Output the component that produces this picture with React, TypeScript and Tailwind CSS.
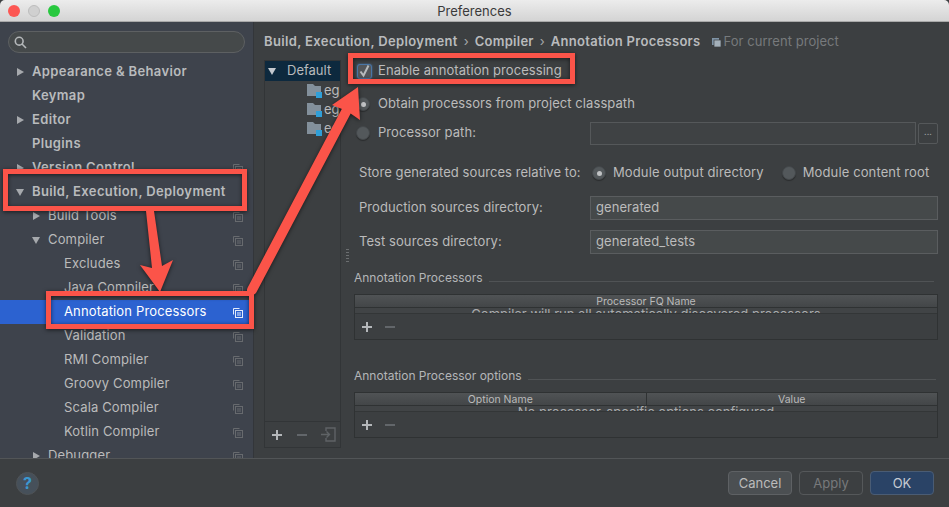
import React from "react";

const Tri = ({ down, light }: { down?: boolean; light?: boolean }) => (
  <svg width="10" height="10" viewBox="0 0 10 10" className="shrink-0">
    <path d={down ? "M1 2h8L5 9z" : "M2 1l7 4-7 4z"} fill={light ? "#c4c9cf" : "#a6a9ad"} />
  </svg>
);

const Copy = ({ c = "#6d7074" }: { c?: string }) => (
  <svg width="10" height="10" viewBox="0 0 10 10" fill="none" stroke={c} strokeWidth="1" className="shrink-0 mt-[1px]">
    <path d="M.5 6.5v-6h6" />
    <rect x="2.5" y="2.5" width="7" height="7" />
    <path d="M4 5h4M4 7h4" />
  </svg>
);

const Folder = () => (
  <svg width="16" height="14" viewBox="0 0 16 14" className="shrink-0">
    <path d="M0 0h6l2 2h6v10H0z" fill="#83909b" />
    <rect x="9" y="8" width="6" height="6" fill="#2f9fd8" />
  </svg>
);

const rows: { t: string; level: number; arrow?: "r" | "d"; bold?: boolean; copy?: boolean; sel?: boolean }[] = [
  { t: "Appearance & Behavior", level: 0, arrow: "r", bold: true },
  { t: "Keymap", level: 0, bold: true },
  { t: "Editor", level: 0, arrow: "r", bold: true },
  { t: "Plugins", level: 0, bold: true },
  { t: "Version Control", level: 0, arrow: "r", bold: true, copy: true },
  { t: "Build, Execution, Deployment", level: 0, arrow: "d", bold: true },
  { t: "Build Tools", level: 1, arrow: "r", copy: true },
  { t: "Compiler", level: 1, arrow: "d", copy: true },
  { t: "Excludes", level: 2, copy: true },
  { t: "Java Compiler", level: 2, copy: true },
  { t: "Annotation Processors", level: 2, copy: true, sel: true },
  { t: "Validation", level: 2, copy: true },
  { t: "RMI Compiler", level: 2, copy: true },
  { t: "Groovy Compiler", level: 2, copy: true },
  { t: "Scala Compiler", level: 2, copy: true },
  { t: "Kotlin Compiler", level: 2, copy: true },
  { t: "Debugger", level: 1, arrow: "r", copy: true },
];

const Radio = ({ on }: { on?: boolean }) => (
  <span className="w-[14px] h-[14px] rounded-full bg-[#53585b] border border-[#43474a] shadow-[0_1px_1px_rgba(0,0,0,0.3)] flex items-center justify-center shrink-0">
    {on && <span className="w-[5px] h-[5px] rounded-full bg-[#c0c2c4]" />}
  </span>
);

const Plus = ({ c = "#b4b7ba" }: { c?: string }) => (
  <svg width="12" height="12" viewBox="0 0 12 12" className="shrink-0">
    <path d="M6 1v10M1 6h10" stroke={c} strokeWidth="2" />
  </svg>
);
const Minus = () => (
  <svg width="12" height="12" viewBox="0 0 12 12" className="shrink-0">
    <path d="M1 6h10" stroke="#62666a" strokeWidth="2" />
  </svg>
);

const Field = ({ label, value }: { label: string; value: string }) => (
  <div className="flex items-center">
    <span className="w-[236px] pl-[5px] shrink-0">{label}</span>
    <div className="flex-1 h-[24px] bg-[#45494a] border border-[#5a5d5f] flex items-center px-[5px] text-[#bcbcbc]">{value}</div>
  </div>
);

const Section = ({ title, lineW }: { title: string; lineW: number }) => (
  <div className="flex items-center gap-[6px] h-[18px] text-[12px] tracking-normal text-[#b4b6b8] whitespace-nowrap">
    <span>{title}</span>
    <span className="h-px bg-[#505355] mt-[6px] shrink-0" style={{ width: lineW }} />
  </div>
);

const Table = ({ cols, clip }: { cols: string[]; clip: string }) => (
  <div className="border border-[#2f3233] h-[46px] flex flex-col text-[10.5px] tracking-normal text-[#bbbbbb]">
    <div className="flex h-[13px] bg-gradient-to-b from-[#505355] to-[#434648] border-b border-[#2f3233] shrink-0">
      {cols.map((c, i) => (
        <div key={c} className={`flex-1 flex items-center justify-center leading-none pt-[2px] ${i > 0 ? "border-l border-[#2f3233]" : ""}`}>{c}</div>
      ))}
    </div>
    <div className="h-[6px] overflow-hidden text-center text-[13px] leading-[13px] text-[#a9abad] border-b border-[#333637] bg-[#414446] shrink-0 whitespace-nowrap">{clip}</div>
    <div className="flex-1 flex items-center gap-[11px] pl-[6px]">
      <Plus />
      <Minus />
    </div>
  </div>
);

const Btn = ({ t, cls }: { t: string; cls: string }) => (
  <div className={`w-[64px] h-[24px] rounded-[4px] flex items-center justify-center text-[13px] pt-[1px] ${cls}`}>{t}</div>
);

export default function App() {
  return (
    <div className="relative w-[949px] h-[507px] overflow-hidden flex flex-col bg-[#3c3f41] text-[13px] text-[#bbbbbb] font-['Inter','Liberation_Sans',sans-serif]">
      <div className="h-[22px] shrink-0 relative flex items-center justify-center bg-gradient-to-b from-[#ececec] to-[#d4d4d4] border-b border-[#a9a9a9] rounded-t-[5px]">
        <div className="absolute left-[8px] top-[5px] flex gap-[8px]">
          <span className="w-[12px] h-[12px] rounded-full bg-[#fc5753]" />
          <span className="w-[12px] h-[12px] rounded-full bg-[#d0d0d0] border border-[#bdbdbd]" />
          <span className="w-[12px] h-[12px] rounded-full bg-[#28c83f]" />
        </div>
        <span className="text-[#3a3a3a] text-[13px] leading-none pt-[1px]">Preferences</span>
      </div>

      <div className="flex-1 flex min-h-0">
        <aside className="w-[254px] shrink-0 bg-[#3e434c] border-r border-[#33363a] flex flex-col overflow-hidden">
          <div className="px-[8px] pt-[9px] pb-[7px] shrink-0">
            <div className="h-[22px] rounded-full bg-[#45494a] border border-[#5d6062] flex items-center pl-[5px]">
              <svg width="13" height="13" viewBox="0 0 13 13" fill="none" stroke="#b5b8ba" strokeWidth="1.6">
                <circle cx="5.2" cy="5.2" r="3.9" />
                <path d="M8 8l4 4" />
              </svg>
            </div>
          </div>
          {rows.map((r) => (
            <div key={r.t} className={`h-[24px] shrink-0 flex items-center relative pr-[10px] ${r.sel ? "bg-[#2c62d0] text-white" : ""} ${r.bold ? "font-semibold text-[#b9bbbd] tracking-[0.36px]" : "tracking-[0.15px]"}`}>
              <div className={`flex items-center ${r.level === 0 ? "pl-[15px]" : r.level === 1 ? "pl-[31px]" : "pl-[64px]"}`}>
                {r.arrow && <Tri down={r.arrow === "d"} />}
                <span className={`${r.arrow ? "ml-[7px]" : r.level === 0 ? "ml-[17px]" : ""} whitespace-nowrap`}>{r.t}</span>
              </div>
              {r.copy && (
                <div className="ml-auto">
                  <Copy c={r.sel ? "#e4ecfb" : "#676a6e"} />
                </div>
              )}
            </div>
          ))}
        </aside>

        <main className="flex-1 min-w-0 pl-[10px] pr-[11px] flex flex-col">
          <div className="h-[38px] shrink-0 flex items-center whitespace-nowrap pt-[2px]">
            <span className="font-semibold text-[#b9bbbd] tracking-[0.36px]">Build, Execution, Deployment</span>
            <span className="mx-[6px] text-[#a5a7a9]">›</span>
            <span className="font-semibold text-[#b9bbbd] tracking-[0.25px]">Compiler</span>
            <span className="mx-[6px] text-[#a5a7a9]">›</span>
            <span className="font-semibold text-[#b9bbbd] tracking-[0.3px]">Annotation Processors</span>
            <svg width="9" height="9" viewBox="0 0 9 9" className="ml-[11px] shrink-0" fill="none">
              <rect x="0" y="0" width="7" height="7" fill="#7f94a6" />
              <rect x="2" y="2" width="7" height="7" fill="#a4b0ba" stroke="#3c3f41" strokeWidth="0.7" />
            </svg>
            <span className="ml-[3px] text-[#777a7c] tracking-[0.05px]">For current project</span>
          </div>

          <div className="flex">
            <div className="w-[77px] h-[388px] shrink-0 border border-[#323537] flex flex-col">
              <div className="h-[20px] shrink-0 bg-[#0d293e] flex items-center pl-[2px]">
                <Tri down light />
                <span className="ml-[10px] text-[#b9bbbd]">Default</span>
              </div>
              <div className="flex-1 pl-[42px] overflow-hidden">
                {[0, 1, 2].map((i) => (
                  <div key={i} className="h-[19px] flex items-center gap-[1px] overflow-hidden whitespace-nowrap">
                    <Folder />
                    <span>eg</span>
                  </div>
                ))}
              </div>
              <div className="h-[26px] shrink-0 border-t border-[#323537] flex items-center pl-[6px] gap-[13px]">
                <Plus />
                <Minus />
                <svg width="15" height="15" viewBox="0 0 15 15" fill="none" stroke="#5f6366" strokeWidth="1.4">
                  <path d="M5 4V1h9v13H5v-3M0 7.5h8M5.5 4.5l3 3-3 3" />
                </svg>
              </div>
            </div>

            <div className="w-[13px] shrink-0 flex items-start justify-center pt-[189px]">
              <div className="w-[3px] h-[14px] bg-[repeating-linear-gradient(to_bottom,#6b6e70_0,#6b6e70_1px,transparent_1px,transparent_3px)]" />
            </div>

            <div className="flex-1 min-w-0 flex flex-col text-[13px] tracking-[0.07px]">
              <div className="h-[24px] mt-[-1px] flex items-center pl-[3px] gap-[6px]">
                <span className="w-[15px] h-[15px] rounded-[3px] bg-[#53565a] border border-[#4a76a6] shadow-[0_0_2px_#4a76a6] flex items-center justify-center shrink-0">
                  <svg width="13" height="13" viewBox="0 0 13 13" fill="none" stroke="#b7babc" strokeWidth="2" className="overflow-visible">
                    <path d="M2.5 6.5l3 4 5-10" />
                  </svg>
                </span>
                <span>Enable annotation processing</span>
              </div>
              <div className="h-[24px] mt-[9px] flex items-center pl-[2px] gap-[8px]">
                <Radio on />
                <span>Obtain processors from project classpath</span>
              </div>
              <div className="h-[24px] mt-[5px] flex items-center pl-[2px]">
                <Radio />
                <span className="ml-[8px]">Processor path:</span>
                <div className="ml-auto w-[326px] h-[23px] bg-[#3f4244] border border-[#55585a]" />
                <div className="ml-[2px] w-[20px] h-[21px] rounded-[2px] border border-[#55585a] flex items-center justify-center text-[9px] leading-none text-[#9a9c9e] pb-[3px]">...</div>
              </div>
              <div className="h-[24px] mt-[16px] flex items-center pl-[5px]">
                <span className="w-[233px] shrink-0">Store generated sources relative to:</span>
                <Radio on />
                <span className="ml-[7px] tracking-[0.12px]">Module output directory</span>
                <span className="ml-[18px]"><Radio /></span>
                <span className="ml-[7px] tracking-[0.12px]">Module content root</span>
              </div>
              <div className="mt-[11px]">
                <Field label="Production sources directory:" value="generated" />
              </div>
              <div className="mt-[10px]">
                <Field label="Test sources directory:" value="generated_tests" />
              </div>
              <div className="mt-[15px]">
                <Section title="Annotation Processors" lineW={445} />
              </div>
              <div className="mt-[7px]">
                <Table cols={["Processor FQ Name"]} clip="Compiler will run all automatically discovered processors" />
              </div>
              <div className="mt-[27px]">
                <Section title="Annotation Processor options" lineW={408} />
              </div>
              <div className="mt-[7px]">
                <Table cols={["Option Name", "Value"]} clip="No processor-specific options configured" />
              </div>
            </div>
          </div>
        </main>
      </div>

      <footer className="h-[49px] shrink-0 border-t border-[#525557] bg-[#3c3f41] flex items-center pl-[16px] pr-[15px] relative z-0">
        <div className="w-[23px] h-[23px] rounded-full bg-[#46505a] border border-[#4f5356] flex items-center justify-center text-[#3b97d0] font-bold text-[16px] leading-none">?</div>
        <div className="ml-auto flex gap-[7px]">
          <Btn t="Cancel" cls="bg-[#4b4f52] border border-[#5e6164] text-[#bbbbbb]" />
          <Btn t="Apply" cls="border border-[#55585a] text-[#77797b]" />
          <Btn t="OK" cls="bg-[#2a4366] border border-[#4a5c74] text-[#c6cbd2]" />
        </div>
      </footer>

      <svg width="949" height="507" viewBox="0 0 949 507" className="absolute inset-0 pointer-events-none drop-shadow-[0_1px_2px_rgba(0,0,0,0.6)]" fill="none">
        <rect x="5.5" y="171.5" width="239" height="37" stroke="#fb5449" strokeWidth="5" />
        <rect x="48.5" y="293.5" width="203" height="33" stroke="#fb5449" strokeWidth="5" />
        <rect x="350.5" y="55.5" width="222" height="26" stroke="#fb5449" strokeWidth="5" />
        <path d="M146 211h8l8 55 11-6-13 32-20-27 12 3z" fill="#fb5449" />
        <path d="M252 290L349 106" stroke="#fb5449" strokeWidth="10" strokeLinecap="round" />
        <path d="M358 87l2 33-13-9-15-6z" fill="#fb5449" />
      </svg>
    </div>
  );
}
